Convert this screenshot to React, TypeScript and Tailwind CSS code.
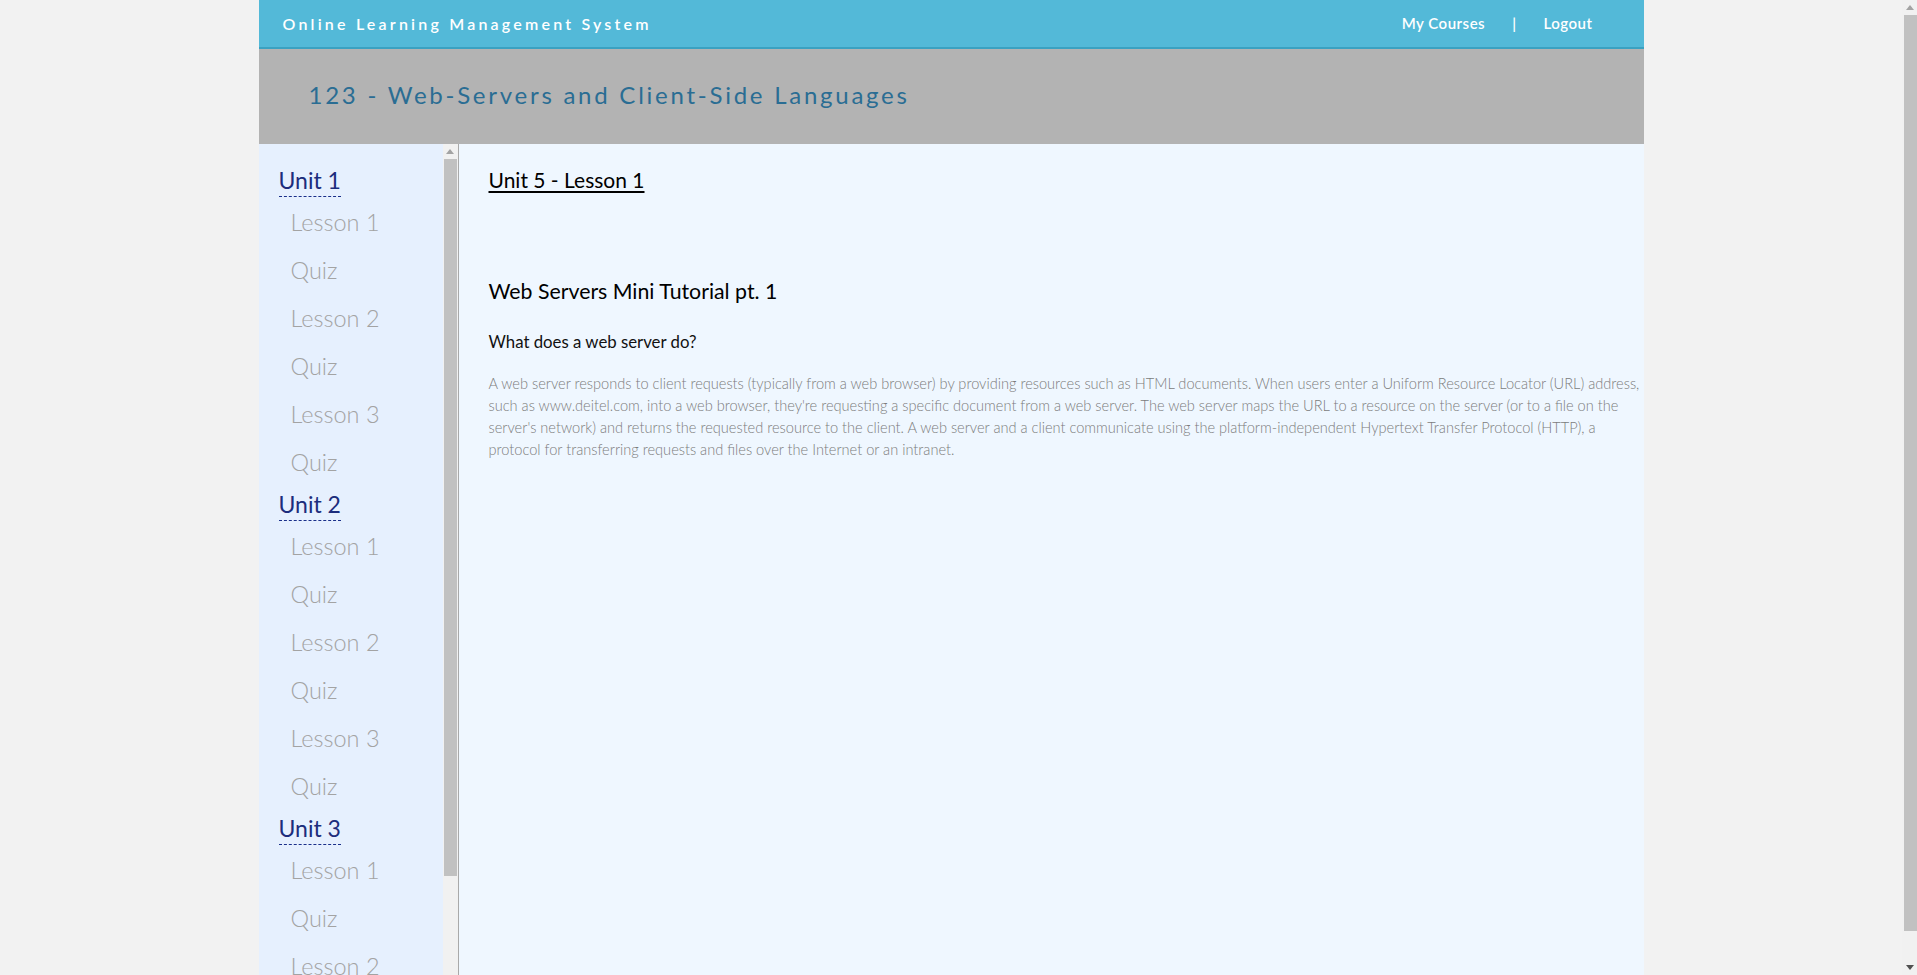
function Arrow({ dir, color }: { dir: 'up' | 'down'; color: string }) {
  return (
    <div className="flex h-[15px] w-full items-center justify-center">
      <svg width="8" height="5" viewBox="0 0 8 5">
        {dir === 'up' ? <polygon points="0,5 8,5 4,0" fill={color} /> : <polygon points="0,0 8,0 4,5" fill={color} />}
      </svg>
    </div>
  );
}

export default function App() {
  const units = ['Unit 1', 'Unit 2', 'Unit 3'];
  const items = ['Lesson 1', 'Quiz', 'Lesson 2', 'Quiz', 'Lesson 3', 'Quiz'];
  return (
    <div className="flex h-screen overflow-hidden bg-[#f2f2f2] font-['Lato',sans-serif]">
      <div className="min-w-0 flex-1">
        <div className="mx-auto w-[1385px]">
          <header className="flex h-[49px] items-center justify-between border-b-2 border-[#3aa1c1] bg-[#53b9d8] pl-[24px] pr-[51px] text-white">
            <div className="text-[16px] font-semibold tracking-[3.2px]">Online Learning Management System</div>
            <nav className="flex items-center text-[15px] font-semibold tracking-[0.5px]">
              <a className="cursor-pointer">My Courses</a>
              <span className="mx-[27px]">|</span>
              <a className="cursor-pointer">Logout</a>
            </nav>
          </header>
          <div className="flex h-[95px] items-center bg-[#b3b3b3] pb-[4px] pl-[50px]">
            <h1 className="text-[24px] tracking-[2.75px] text-[#2a6d93]">123 - Web-Servers and Client-Side Languages</h1>
          </div>
          <div className="flex h-[862px]">
            <aside className="flex w-[200px] shrink-0 border-r border-[#a9a9a9] bg-[#e6f0fe]">
              <div className="w-[184px] overflow-hidden pl-[20px] pt-[17px]">
                {units.map((u) => (
                  <div key={u}>
                    <div className="inline-block border-b border-dashed border-[#1a2f8a] pt-[3px] text-[23px] leading-[32px] text-[#1c2d7c]">
                      {u}
                    </div>
                    {items.map((it, i) => (
                      <div key={i} className="h-[48px] pl-[12px] text-[23.5px] font-light leading-[50px] text-[#a3a3a3]">
                        {it}
                      </div>
                    ))}
                  </div>
                ))}
              </div>
              <div className="flex w-[15px] flex-col bg-[#f1f1f1]">
                <Arrow dir="up" color="#a3a3a3" />
                <div className="mx-[1px] h-[717px] bg-[#c1c1c1]" />
              </div>
            </aside>
            <main className="min-w-0 flex-1 overflow-hidden bg-[#eff7ff] pl-[30px] pt-[20px]">
              <h2 className="text-[21px] leading-[32px] text-black">
                <span className="underline decoration-2 underline-offset-[3px]">Unit 5 - Lesson 1</span>
              </h2>
              <h3 className="mt-[79px] text-[21.3px] leading-[32px] text-black">Web Servers Mini Tutorial pt. 1</h3>
              <h4 className="mt-[23px] text-[16.8px] leading-[24px] text-[#111]">What does a web server do?</h4>
              <p className="mt-[18.5px] whitespace-nowrap text-[14.6px] font-light leading-[22px] text-[#7c7c7c]">
                A web server responds to client requests (typically from a web browser) by providing resources such as HTML documents. When users enter a Uniform Resource Locator (URL) address,
                <br />
                such as www.deitel.com, into a web browser, they're requesting a specific document from a web server. The web server maps the URL to a resource on the server (or to a file on the
                <br />
                server's network) and returns the requested resource to the client. A web server and a client communicate using the platform-independent Hypertext Transfer Protocol (HTTP), a
                <br />
                protocol for transferring requests and files over the Internet or an intranet.
              </p>
            </main>
          </div>
        </div>
      </div>
      <div className="flex w-[15px] shrink-0 flex-col bg-[#f1f1f1]">
        <Arrow dir="up" color="#a3a3a3" />
        <div className="ml-[2px] h-[916px] bg-[#c1c1c1]" />
        <div className="flex-1" />
        <Arrow dir="down" color="#505050" />
      </div>
    </div>
  );
}
